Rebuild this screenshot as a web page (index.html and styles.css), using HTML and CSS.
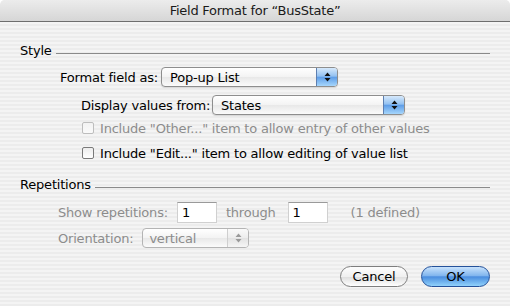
FILE: index.html
```html
<!DOCTYPE html>
<html lang="en">
<head>
    <meta charset="UTF-8">
    <title>Field Format for “BusState”</title>
    <link rel="stylesheet" href="styles.css">
</head>
<body>
    <div class="window">
        <div class="titlebar">Field Format for “BusState”</div>
        <div class="dialog">
            <div class="group">
                <span>Style</span>
                <div class="rule"></div>
            </div>

            <div class="row row-format">
                <span class="label label-format">Format field as:</span>
                <div class="popup popup-format">
                    <span class="value">Pop-up List</span>
                    <span class="arrows">
                        <svg width="7" height="10" viewBox="0 0 7 10"><path d="M3.5 0.5 L6.5 4 L0.5 4 Z M0.5 6 L6.5 6 L3.5 9.5 Z" fill="#111"/></svg>
                    </span>
                </div>
            </div>

            <div class="row row-display">
                <span class="label label-display">Display values from:</span>
                <div class="popup popup-display">
                    <span class="value">States</span>
                    <span class="arrows">
                        <svg width="7" height="10" viewBox="0 0 7 10"><path d="M3.5 0.5 L6.5 4 L0.5 4 Z M0.5 6 L6.5 6 L3.5 9.5 Z" fill="#111"/></svg>
                    </span>
                </div>
            </div>

            <div class="row row-check disabled">
                <span class="check"></span>
                <span>Include "Other..." item to allow entry of other values</span>
            </div>
            <div class="row row-check row-check2">
                <span class="check"></span>
                <span>Include "Edit..." item to allow editing of value list</span>
            </div>

            <div class="group group-rep">
                <span>Repetitions</span>
                <div class="rule"></div>
            </div>

            <div class="row row-rep disabled">
                <span class="rep-label">Show repetitions:</span>
                <span class="field">1</span>
                <span class="through">through</span>
                <span class="field">1</span>
                <span class="defined">(1 defined)</span>
            </div>

            <div class="row row-orient disabled">
                <span class="rep-label">Orientation:</span>
                <div class="popup popup-orient">
                    <span class="value">vertical</span>
                    <span class="arrows">
                        <svg width="7" height="10" viewBox="0 0 7 10"><path d="M3.5 0.5 L6.5 4 L0.5 4 Z M0.5 6 L6.5 6 L3.5 9.5 Z" fill="#9a9a9a"/></svg>
                    </span>
                </div>
            </div>

            <div class="buttons">
                <button class="btn cancel">Cancel</button>
                <button class="btn ok">OK</button>
            </div>
        </div>
    </div>
</body>
</html>
```

FILE: styles.css
```css
html {
    background: #fff;
}
body {
    margin: 0;
    font-family: "DejaVu Sans", sans-serif;
    font-size: 13px;
    letter-spacing: -0.2px;
    color: #000;
}
.window {
    width: 510px;
    height: 306px;
    border-radius: 5px 5px 0 0;
    overflow: hidden;
    background: repeating-linear-gradient(#ececec 0 2px, #f4f4f4 2px 4px);
}
.titlebar {
    height: 21px;
    line-height: 21px;
    text-align: center;
    letter-spacing: -0.25px;
    color: #1a1a1a;
    background: linear-gradient(#ececec, #d6d6d6);
    border-bottom: 1px solid #6e6e6e;
}
.dialog {
    padding: 0 20px;
}
.group {
    display: flex;
    align-items: center;
    height: 16px;
    line-height: 16px;
    margin-top: 21px;
}
.group .rule {
    flex: 1;
    border-top: 1px solid #8a8a8a;
    margin: 4px 0 0 4px;
}
.group-rep {
    margin-top: 16px;
}
.row {
    display: flex;
    align-items: center;
    white-space: nowrap;
}
.disabled {
    color: #8c8c8c;
}
.label {
    text-align: right;
    margin-right: 3px;
}
.row-format {
    margin-top: 8px;
    padding-left: 38px;
}
.label-format {
    width: 100px;
}
.row-display {
    margin-top: 8px;
    padding-left: 61px;
}
.label-display {
    width: 128px;
}
.popup {
    height: 20px;
    box-sizing: border-box;
    display: flex;
    align-items: center;
    border: 1px solid #8e8e8e;
    border-radius: 4px;
    background: linear-gradient(#ffffff, #f3f3f3 50%, #e8e8e8 51%, #fbfbfb);
    box-shadow: 0 1px 1px rgba(0,0,0,0.12);
    color: #000;
}
.popup .value {
    flex: 1;
    padding-left: 8px;
}
.popup .arrows {
    width: 20px;
    align-self: stretch;
    display: flex;
    align-items: center;
    justify-content: center;
    border-left: 1px solid #5d7fb0;
    border-radius: 0 3px 3px 0;
    background: linear-gradient(#d6e9fc, #93c1f1 45%, #5f9ee8 52%, #a6d6fc);
}
.popup-format {
    width: 177px;
}
.popup-display {
    width: 193px;
}
.row-check {
    height: 16px;
    margin-top: 5px;
    padding-left: 62px;
}
.row-check2 {
    margin-top: 9px;
}
.check {
    width: 12px;
    height: 12px;
    box-sizing: border-box;
    border: 1px solid #7a7a7a;
    border-radius: 2px;
    background: linear-gradient(#ededed, #ffffff);
    margin-right: 6px;
}
.disabled .check {
    border-color: #bdbdbd;
    background: linear-gradient(#f2f2f2, #fafafa);
}
.row-rep {
    margin-top: 9px;
    padding-left: 38px;
}
.rep-label {
    margin-right: 9px;
}
.field {
    width: 40px;
    height: 21px;
    box-sizing: border-box;
    padding-left: 4px;
    line-height: 19px;
    background: #fff;
    color: #000;
    border: 1px solid #d0d0d0;
    border-top-color: #9a9a9a;
}
.through {
    margin: 0 12px 0 9px;
}
.defined {
    margin-left: 23px;
}
.row-orient {
    margin-top: 5px;
    padding-left: 38px;
}
.popup-orient {
    width: 107px;
    color: #8c8c8c;
    border-color: #b4b4b4;
    box-shadow: none;
}
.popup-orient .value {
    padding-left: 6px;
}
.popup-orient .arrows {
    border-left: 1px solid #cfcfcf;
    background: linear-gradient(#fafafa, #ececec 50%, #e2e2e2 51%, #f6f6f6);
}
.buttons {
    display: flex;
    justify-content: flex-end;
    gap: 13px;
    margin-top: 18px;
}
.btn {
    height: 21px;
    box-sizing: border-box;
    padding: 0;
    font-family: "DejaVu Sans", sans-serif;
    font-size: 13px;
    letter-spacing: -0.2px;
    color: #000;
    border-radius: 11px;
}
.cancel {
    width: 68px;
    border: 1px solid #7e7e7e;
    background: linear-gradient(#fdfdfd, #f0f0f0 50%, #dedede 52%, #ffffff);
}
.ok {
    width: 69px;
    border: 1px solid #24519a;
    background: linear-gradient(#c8e2fc, #82b6ee 45%, #4a8ddf 52%, #91d2fb);
}
```
